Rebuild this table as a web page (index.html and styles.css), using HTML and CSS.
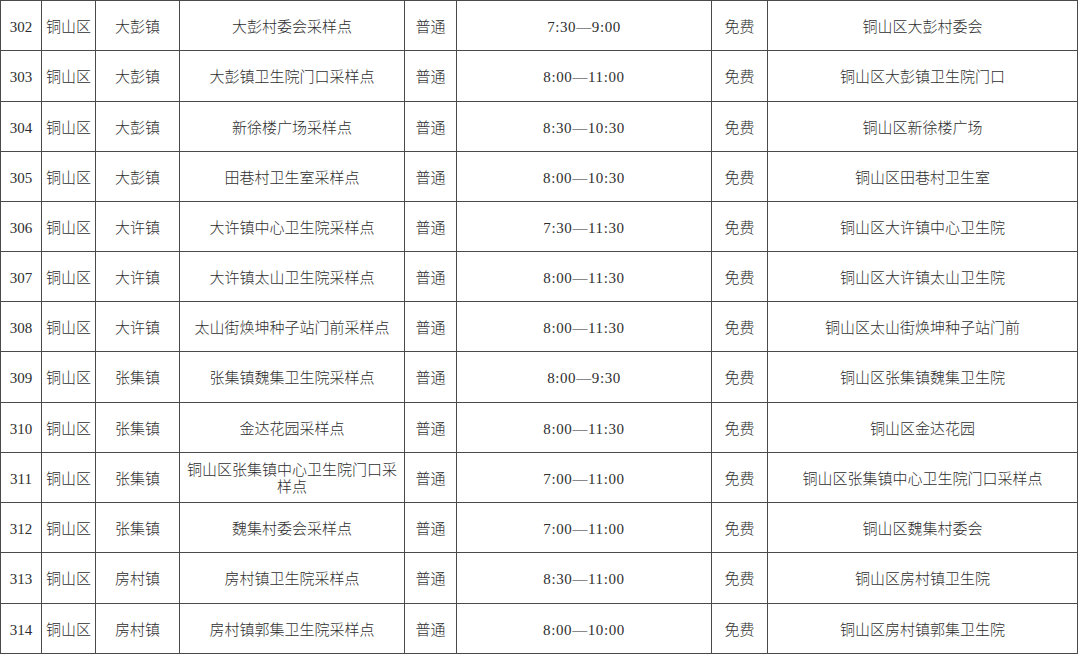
FILE: index.html
```html
<!DOCTYPE html>
<html lang="zh-CN">
<head>
<meta charset="utf-8">
<title>铜山区采样点</title>
<link rel="stylesheet" href="styles.css">
</head>
<body>
<div class="sheet">
  <div class="c">302</div><div class="c">铜山区</div><div class="c">大彭镇</div><div class="c">大彭村委会采样点</div><div class="c">普通</div><div class="c t">7:30—9:00</div><div class="c">免费</div><div class="c">铜山区大彭村委会</div>
  <div class="c">303</div><div class="c">铜山区</div><div class="c">大彭镇</div><div class="c">大彭镇卫生院门口采样点</div><div class="c">普通</div><div class="c t">8:00—11:00</div><div class="c">免费</div><div class="c">铜山区大彭镇卫生院门口</div>
  <div class="c">304</div><div class="c">铜山区</div><div class="c">大彭镇</div><div class="c">新徐楼广场采样点</div><div class="c">普通</div><div class="c t">8:30—10:30</div><div class="c">免费</div><div class="c">铜山区新徐楼广场</div>
  <div class="c">305</div><div class="c">铜山区</div><div class="c">大彭镇</div><div class="c">田巷村卫生室采样点</div><div class="c">普通</div><div class="c t">8:00—10:30</div><div class="c">免费</div><div class="c">铜山区田巷村卫生室</div>
  <div class="c">306</div><div class="c">铜山区</div><div class="c">大许镇</div><div class="c">大许镇中心卫生院采样点</div><div class="c">普通</div><div class="c t">7:30—11:30</div><div class="c">免费</div><div class="c">铜山区大许镇中心卫生院</div>
  <div class="c">307</div><div class="c">铜山区</div><div class="c">大许镇</div><div class="c">大许镇太山卫生院采样点</div><div class="c">普通</div><div class="c t">8:00—11:30</div><div class="c">免费</div><div class="c">铜山区大许镇太山卫生院</div>
  <div class="c">308</div><div class="c">铜山区</div><div class="c">大许镇</div><div class="c">太山街焕坤种子站门前采样点</div><div class="c">普通</div><div class="c t">8:00—11:30</div><div class="c">免费</div><div class="c">铜山区太山街焕坤种子站门前</div>
  <div class="c">309</div><div class="c">铜山区</div><div class="c">张集镇</div><div class="c">张集镇魏集卫生院采样点</div><div class="c">普通</div><div class="c t">8:00—9:30</div><div class="c">免费</div><div class="c">铜山区张集镇魏集卫生院</div>
  <div class="c">310</div><div class="c">铜山区</div><div class="c">张集镇</div><div class="c">金达花园采样点</div><div class="c">普通</div><div class="c t">8:00—11:30</div><div class="c">免费</div><div class="c">铜山区金达花园</div>
  <div class="c">311</div><div class="c">铜山区</div><div class="c">张集镇</div><div class="c">铜山区张集镇中心卫生院门口采样点</div><div class="c">普通</div><div class="c t">7:00—11:00</div><div class="c">免费</div><div class="c">铜山区张集镇中心卫生院门口采样点</div>
  <div class="c">312</div><div class="c">铜山区</div><div class="c">张集镇</div><div class="c">魏集村委会采样点</div><div class="c">普通</div><div class="c t">7:00—11:00</div><div class="c">免费</div><div class="c">铜山区魏集村委会</div>
  <div class="c">313</div><div class="c">铜山区</div><div class="c">房村镇</div><div class="c">房村镇卫生院采样点</div><div class="c">普通</div><div class="c t">8:30—11:00</div><div class="c">免费</div><div class="c">铜山区房村镇卫生院</div>
  <div class="c">314</div><div class="c">铜山区</div><div class="c">房村镇</div><div class="c">房村镇郭集卫生院采样点</div><div class="c">普通</div><div class="c t">8:00—10:00</div><div class="c">免费</div><div class="c">铜山区房村镇郭集卫生院</div>
</div>
</body>
</html>
```
FILE: styles.css
```css
html, body {
  margin: 0;
  padding: 0;
  background: #ffffff;
}

body {
  font-family: "Liberation Serif", "Noto Sans CJK SC", serif;
  font-size: 15px;
  font-weight: 300;
  color: #2e2e2e;
}

.sheet {
  display: grid;
  width: max-content;
  grid-template-columns: 40px 53px 83px 224px 51px 254px 55px 309px;
  grid-template-rows: 49px 50px 49px 49px 49px 49px 49px 50px 49px 49px 49px 50px 49px;
  gap: 1px;
  padding: 1px;
  background: #4a4a4a;
}

.c {
  background: #ffffff;
  display: flex;
  align-items: center;
  justify-content: center;
  text-align: center;
  padding: 3px 4px 0;
  line-height: 17px;
}

.t {
  letter-spacing: 0.6px;
}
```
